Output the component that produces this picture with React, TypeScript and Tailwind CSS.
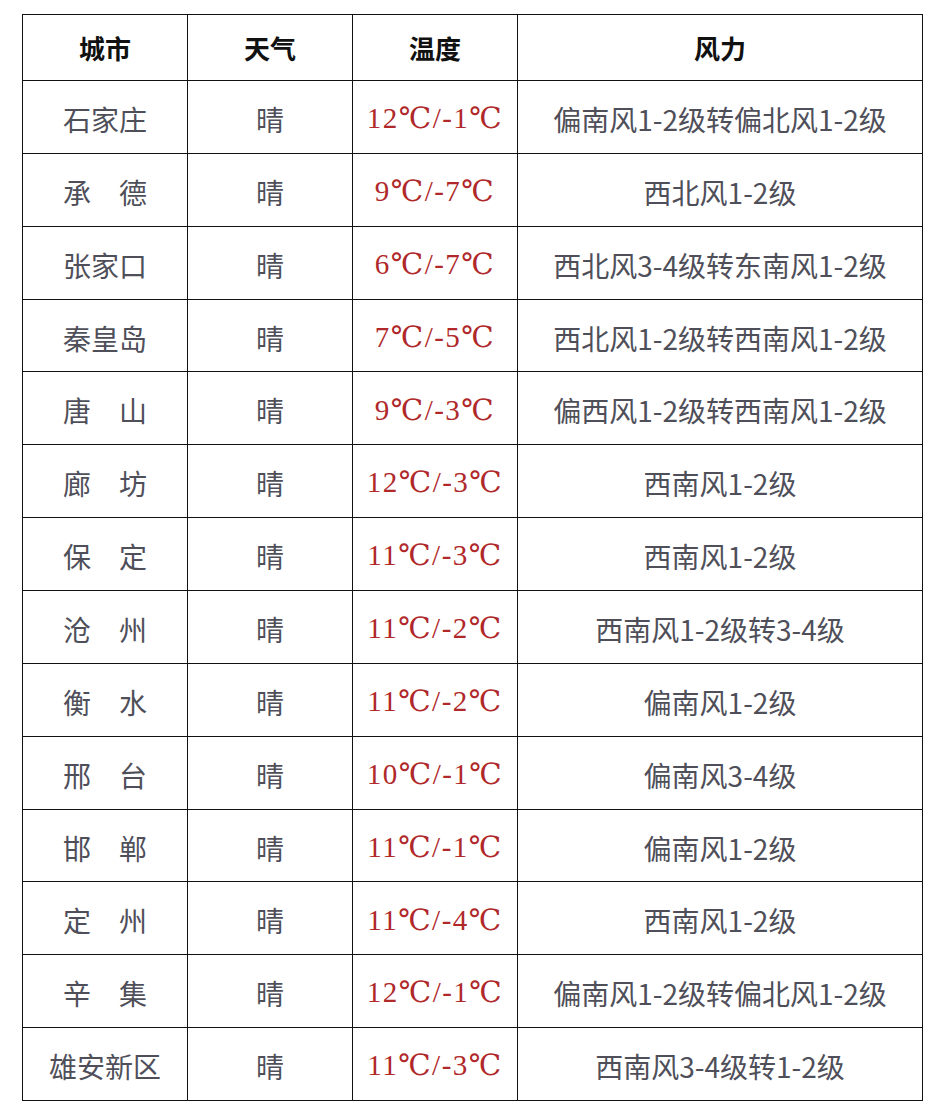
const rows: [string, string, string, string][] = [
  ["石家庄", "晴", "12℃/-1℃", "偏南风1-2级转偏北风1-2级"],
  ["承　德", "晴", "9℃/-7℃", "西北风1-2级"],
  ["张家口", "晴", "6℃/-7℃", "西北风3-4级转东南风1-2级"],
  ["秦皇岛", "晴", "7℃/-5℃", "西北风1-2级转西南风1-2级"],
  ["唐　山", "晴", "9℃/-3℃", "偏西风1-2级转西南风1-2级"],
  ["廊　坊", "晴", "12℃/-3℃", "西南风1-2级"],
  ["保　定", "晴", "11℃/-3℃", "西南风1-2级"],
  ["沧　州", "晴", "11℃/-2℃", "西南风1-2级转3-4级"],
  ["衡　水", "晴", "11℃/-2℃", "偏南风1-2级"],
  ["邢　台", "晴", "10℃/-1℃", "偏南风3-4级"],
  ["邯　郸", "晴", "11℃/-1℃", "偏南风1-2级"],
  ["定　州", "晴", "11℃/-4℃", "西南风1-2级"],
  ["辛　集", "晴", "12℃/-1℃", "偏南风1-2级转偏北风1-2级"],
  ["雄安新区", "晴", "11℃/-3℃", "西南风3-4级转1-2级"],
];

const cjk = "font-['Noto_Sans_CJK_SC',sans-serif]";

export default function App() {
  return (
    <div className="min-h-[1116px] w-[942px] bg-white pl-[22px] pt-[14px]">
      <table className="w-[900px] table-fixed border-collapse">
        <colgroup>
          <col className="w-[165px]" />
          <col className="w-[165px]" />
          <col className="w-[165px]" />
          <col className="w-[405px]" />
        </colgroup>
        <thead>
          <tr className="h-[66px]">
            {["城市", "天气", "温度", "风力"].map((h) => (
              <th
                key={h}
                className={`border-[1.5px] border-[#111] text-center align-middle text-[26px] font-bold text-[#111] ${cjk}`}
              >
                {h}
              </th>
            ))}
          </tr>
        </thead>
        <tbody>
          {rows.map(([city, weather, temp, wind]) => (
            <tr key={city} className="h-[72.86px]">
              <td className={`border-[1.5px] border-[#111] pt-[4px] text-center align-middle text-[28px] text-[#4f4f5a] ${cjk}`}>
                {city}
              </td>
              <td className={`border-[1.5px] border-[#111] pt-[4px] text-center align-middle text-[28px] text-[#4f4f5a] ${cjk}`}>
                {weather}
              </td>
              <td className="border-[1.5px] border-[#111] pt-[4px] text-center align-middle font-['Liberation_Serif','DejaVu_Serif','Noto_Sans_CJK_SC',serif] text-[29px] tracking-[1.5px] text-[#b0282a]">
                {temp}
              </td>
              <td className={`border-[1.5px] border-[#111] pt-[4px] text-center align-middle text-[28px] text-[#4f4f5a] ${cjk}`}>
                {wind}
              </td>
            </tr>
          ))}
        </tbody>
      </table>
    </div>
  );
}
